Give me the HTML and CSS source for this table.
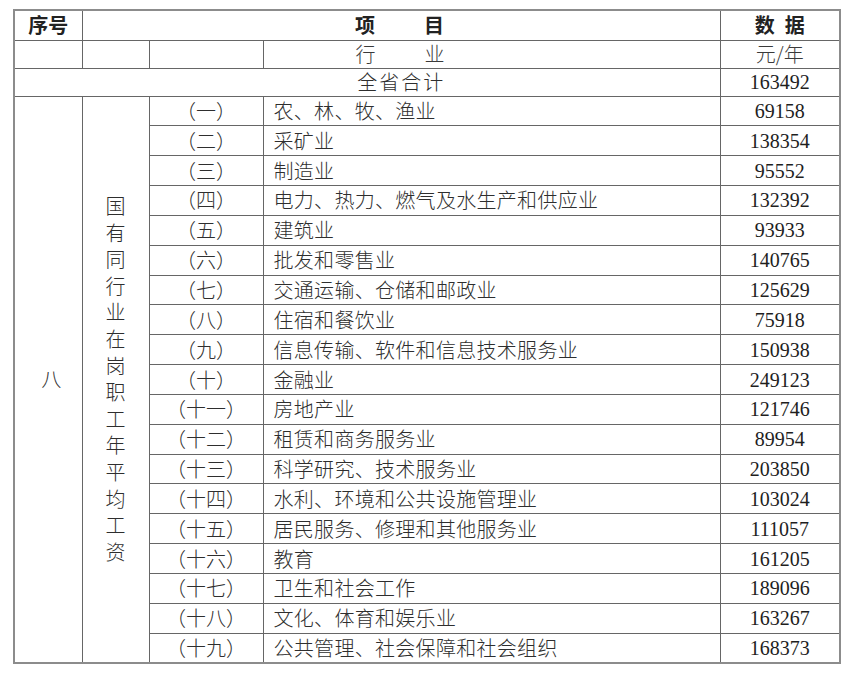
FILE: index.html
```html
<!DOCTYPE html>
<html lang="zh-CN">
<head>
<meta charset="utf-8">
<title>国有同行业在岗职工年平均工资</title>
<link rel="stylesheet" href="styles.css">
</head>
<body>
<table class="wage">
  <colgroup>
    <col class="c1"><col class="c2"><col class="c3"><col class="c4"><col class="c5">
  </colgroup>
  <tr class="r-head">
    <td class="hd">序号</td>
    <td class="hd spaced" colspan="3">项　　目</td>
    <td class="hd">数&ensp;据</td>
  </tr>
  <tr class="r-sub">
    <td></td>
    <td></td>
    <td></td>
    <td class="sub spaced">行　　业</td>
    <td class="unit">元/年</td>
  </tr>
  <tr class="r-sub">
    <td class="total" colspan="4">全省合计</td>
    <td class="num">163492</td>
  </tr>
  <tr>
    <td class="seq" rowspan="19">八</td>
    <td class="vcell" rowspan="19"><div class="vert">国有同行业在岗职工年平均工资</div></td>
    <td class="idx">（一）</td><td class="name">农、林、牧、渔业</td><td class="num">69158</td>
  </tr>
  <tr><td class="idx">（二）</td><td class="name">采矿业</td><td class="num">138354</td></tr>
  <tr><td class="idx">（三）</td><td class="name">制造业</td><td class="num">95552</td></tr>
  <tr><td class="idx">（四）</td><td class="name">电力、热力、燃气及水生产和供应业</td><td class="num">132392</td></tr>
  <tr><td class="idx">（五）</td><td class="name">建筑业</td><td class="num">93933</td></tr>
  <tr><td class="idx">（六）</td><td class="name">批发和零售业</td><td class="num">140765</td></tr>
  <tr><td class="idx">（七）</td><td class="name">交通运输、仓储和邮政业</td><td class="num">125629</td></tr>
  <tr><td class="idx">（八）</td><td class="name">住宿和餐饮业</td><td class="num">75918</td></tr>
  <tr><td class="idx">（九）</td><td class="name">信息传输、软件和信息技术服务业</td><td class="num">150938</td></tr>
  <tr><td class="idx">（十）</td><td class="name">金融业</td><td class="num">249123</td></tr>
  <tr><td class="idx">（十一）</td><td class="name">房地产业</td><td class="num">121746</td></tr>
  <tr><td class="idx">（十二）</td><td class="name">租赁和商务服务业</td><td class="num">89954</td></tr>
  <tr><td class="idx">（十三）</td><td class="name">科学研究、技术服务业</td><td class="num">203850</td></tr>
  <tr><td class="idx">（十四）</td><td class="name">水利、环境和公共设施管理业</td><td class="num">103024</td></tr>
  <tr><td class="idx">（十五）</td><td class="name">居民服务、修理和其他服务业</td><td class="num">111057</td></tr>
  <tr><td class="idx">（十六）</td><td class="name">教育</td><td class="num">161205</td></tr>
  <tr><td class="idx">（十七）</td><td class="name">卫生和社会工作</td><td class="num">189096</td></tr>
  <tr><td class="idx">（十八）</td><td class="name">文化、体育和娱乐业</td><td class="num">163267</td></tr>
  <tr><td class="idx">（十九）</td><td class="name">公共管理、社会保障和社会组织</td><td class="num">168373</td></tr>
</table>
</body>
</html>
```
FILE: styles.css
```css
html, body {
  margin: 0;
  padding: 0;
  background: #ffffff;
}

body {
  padding: 9px 0 0 13px;
  font-family: "Noto Sans CJK SC", "Noto Sans", sans-serif;
  color: #2e2e2e;
}

.wage {
  border-collapse: collapse;
  table-layout: fixed;
  width: 826px;
  border: 2px solid #8c8c8c;
}

.c1 { width: 68px; }
.c2 { width: 67px; }
.c3 { width: 114px; }
.c4 { width: 457px; }
.c5 { width: 120px; }

.wage td {
  border: 1px solid #666666;
  padding: 0;
  font-size: 20px;
  line-height: 24px;
  font-weight: 300;
  text-align: center;
  vertical-align: middle;
  white-space: nowrap;
  overflow: hidden;
}

.wage tr {
  height: 29.85px;
}

.wage tr.r-head {
  height: 30px;
}

.wage tr.r-sub {
  height: 28px;
}

.wage td.hd {
  font-weight: 700;
  color: #222222;
}

.wage td.spaced {
  letter-spacing: 3px;
}

.wage td.sub {
  text-align: left;
  padding-left: 92px;
  color: #3a3a3a;
}

.wage td.unit {
  color: #3a3a3a;
}

.wage td.total {
  letter-spacing: 2px;
  padding-left: 68px;
}

.wage td.num {
  font-family: "Liberation Serif", "Times New Roman", serif;
  font-weight: 400;
  color: #1e1e1e;
}

.wage td.seq {
  padding-left: 6px;
}

.wage td.name {
  text-align: left;
  padding-left: 10px;
  letter-spacing: 0.3px;
}

.vert {
  width: 20px;
  margin: 0 auto;
  line-height: 26.6px;
  white-space: normal;
  word-break: break-all;
}
```
